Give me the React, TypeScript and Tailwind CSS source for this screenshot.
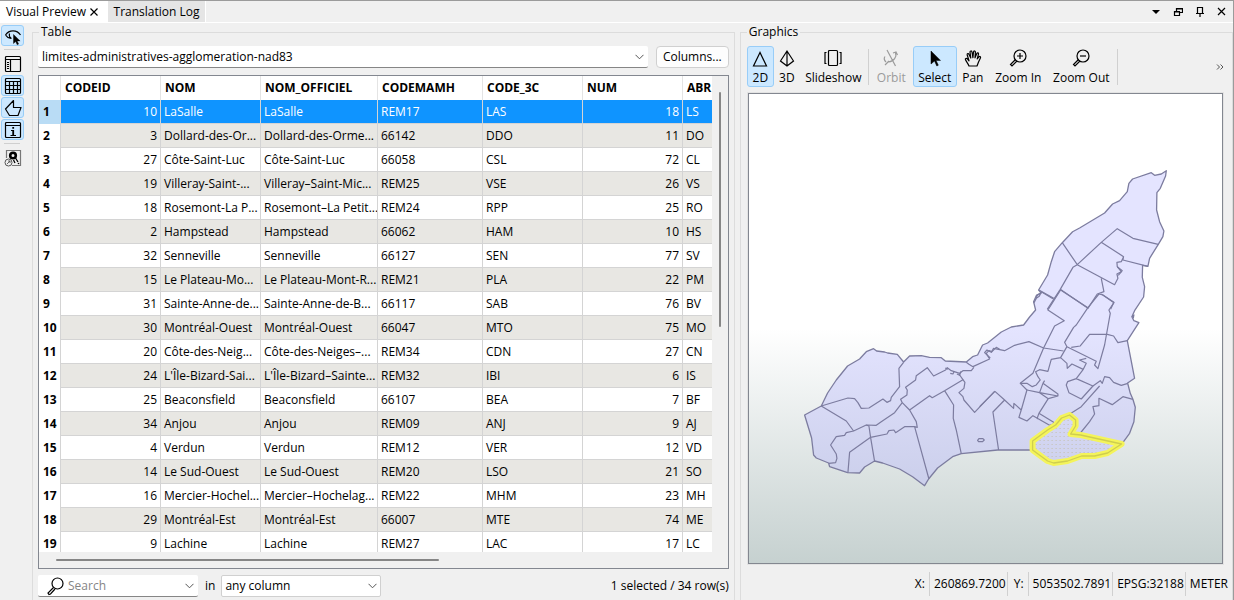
import type { ReactNode } from "react";

type Row = [number, string, string, string, string, number, string];

const rows: Row[] = [
  [10, "LaSalle", "LaSalle", "REM17", "LAS", 18, "LS"],
  [3, "Dollard-des-Or...", "Dollard-des-Orme...", "66142", "DDO", 11, "DO"],
  [27, "Côte-Saint-Luc", "Côte-Saint-Luc", "66058", "CSL", 72, "CL"],
  [19, "Villeray-Saint-...", "Villeray–Saint-Mic...", "REM25", "VSE", 26, "VS"],
  [18, "Rosemont-La P...", "Rosemont–La Petit...", "REM24", "RPP", 25, "RO"],
  [2, "Hampstead", "Hampstead", "66062", "HAM", 10, "HS"],
  [32, "Senneville", "Senneville", "66127", "SEN", 77, "SV"],
  [15, "Le Plateau-Mo...", "Le Plateau-Mont-R...", "REM21", "PLA", 22, "PM"],
  [31, "Sainte-Anne-de...", "Sainte-Anne-de-B...", "66117", "SAB", 76, "BV"],
  [30, "Montréal-Ouest", "Montréal-Ouest", "66047", "MTO", 75, "MO"],
  [20, "Côte-des-Neig...", "Côte-des-Neiges–...", "REM34", "CDN", 27, "CN"],
  [24, "L'Île-Bizard-Sai...", "L'Île-Bizard–Sainte...", "REM32", "IBI", 6, "IS"],
  [25, "Beaconsfield", "Beaconsfield", "66107", "BEA", 7, "BF"],
  [34, "Anjou", "Anjou", "REM09", "ANJ", 9, "AJ"],
  [4, "Verdun", "Verdun", "REM12", "VER", 12, "VD"],
  [14, "Le Sud-Ouest", "Le Sud-Ouest", "REM20", "LSO", 21, "SO"],
  [16, "Mercier-Hochel...", "Mercier–Hochelag...", "REM22", "MHM", 23, "MH"],
  [29, "Montréal-Est", "Montréal-Est", "66007", "MTE", 74, "ME"],
  [9, "Lachine", "Lachine", "REM27", "LAC", 17, "LC"],
];

const headers = ["CODEID", "NOM", "NOM_OFFICIEL", "CODEMAMH", "CODE_3C", "NUM", "ABR"];

function Icon({ size = 20, children, className = "" }: { size?: number; children: ReactNode; className?: string }) {
  return (
    <svg
      width={size}
      height={size}
      viewBox={`0 0 ${size} ${size}`}
      fill="none"
      stroke="currentColor"
      strokeWidth="1.2"
      className={`shrink-0 ${className}`}
      aria-hidden="true"
    >
      {children}
    </svg>
  );
}

const Chevron = () => (
  <svg width="9" height="6" viewBox="0 0 9 6" fill="none" stroke="#555" className="pointer-events-none absolute right-1 top-2" aria-hidden="true">
    <path d="M.5.8l4 4 4-4" />
  </svg>
);

const inspectIcon = (
  <Icon>
    <path d="M2.500 9C6 3.500 14 3.500 17.500 9M2.500 9c1 1.800 3 3 5.500 3.400M6.500 7.500c-.5 2 .2 4 2 5" />
    <path d="M10.500 8.500v9l2.200-2 1.500 3.300 1.400-.7-1.500-3.200h3z" fill="currentColor" strokeWidth=".4" />
  </Icon>
);
const panelIcon = (
  <Icon>
    <rect x="2.500" y="2.500" width="15" height="15" rx="1" />
    <path d="M2.500 5.500h15M7.500 5.500v12" />
    <path d="M4 8.500h2M4 10.500h2M4 12.500h2M4 14.500h2" />
  </Icon>
);
const gridIcon = (
  <Icon>
    <rect x="2.500" y="2.500" width="15" height="15" rx="1" />
    <path d="M2.500 5.500h15M2.500 9.500h15M2.500 13.500h15M6.500 5.500v12M10.500 5.500v12M14.500 5.500v12" />
  </Icon>
);
const shapeIcon = (
  <Icon>
    <path d="M10.500 2.500L2.500 11l4 6.500h8.500l3-8h-7.500z" strokeLinejoin="round" />
  </Icon>
);
const infoIcon = (
  <Icon>
    <rect x="2.500" y="2.500" width="15" height="15" rx="1" />
    <path d="M2.500 5.500h15M8 10.500h2M7.500 15.500h5.500" />
    <path d="M10.200 10v5.500M10.200 7v1.800" strokeWidth="1.800" />
  </Icon>
);
const cogIcon = (
  <Icon>
    <path d="M3.500 10V2.500h14v15H9" stroke="#777" />
    <circle cx="10" cy="7.500" r="2.800" strokeWidth="2.600" />
    <path d="M12.500 10l2.500 4M10.500 12l1.500 3" strokeWidth="1.300" />
    <circle cx="5.500" cy="14.500" r="3.500" fill="#f0f0f0" stroke="#555" strokeWidth="1" />
    <path d="M4 16l3-3M5 13h2v2" stroke="#555" strokeWidth=".9" />
    <circle cx="15.500" cy="15.500" r=".8" fill="currentColor" stroke="none" />
  </Icon>
);

function SideButton({ active = false, label, children }: { active?: boolean; label: string; children: ReactNode }) {
  return (
    <button
      type="button"
      aria-label={label}
      aria-pressed={active}
      className={`flex h-[21px] w-[23px] items-center justify-center rounded-[3px] border ${
        active ? "border-[#98cdf8] bg-[#cce8ff]" : "border-transparent"
      }`}
    >
      {children}
    </button>
  );
}

function ToolButton({
  label,
  icon,
  width,
  active = false,
  disabled = false,
}: {
  label: string;
  icon: ReactNode;
  width: string;
  active?: boolean;
  disabled?: boolean;
}) {
  return (
    <button
      type="button"
      disabled={disabled}
      className={`flex h-[41px] shrink-0 flex-col items-center justify-between rounded-[3px] border pt-px ${width} ${
        active ? "border-[#98cdf8] bg-[#cce8ff]" : "border-transparent"
      } ${disabled ? "text-[#9b9b9b]" : ""}`}
    >
      {icon}
      <span className="whitespace-nowrap leading-4">{label}</span>
    </button>
  );
}

const triangleIcon = (
  <Icon>
    <path d="M10 4.500L3.500 18h13z" />
  </Icon>
);
const pyramidIcon = (
  <Icon>
    <path d="M10 3L3.500 13l6.500 5 6.500-5zM10 3v15" />
  </Icon>
);
const slidesIcon = (
  <Icon>
    <rect x="5.500" y="2.500" width="9" height="15" rx="1" />
    <path d="M3.500 4.500h-1.500v11h1.500M16.500 4.500h1.500v11h-1.500" />
  </Icon>
);
const orbitIcon = (
  <Icon>
    <path d="M6 2l8.500 16M14.500 4.500c1.500 4-1.500 9-7 9.500M12 5l3-1 1.500 3M4 8.500c-1.500 2-.5 4 1 5.500M4 17l4-4" />
  </Icon>
);
const pointerIcon = (
  <Icon>
    <path d="M6 3v13l3.500-3 2.300 5 1.500-.8-2.200-4.800h4.400z" fill="currentColor" strokeWidth=".5" />
  </Icon>
);
const handIcon = (
  <Icon>
    <path
      d="M6 18c-.5-2-2.500-4-3.500-6.200-.6-1.300.9-2 1.900-.9L6 12.800 4.200 7c-.4-1.600 1.300-2 1.800-.6L7.800 10 7 4.200C6.900 2.700 8.700 2.500 9 4l.9 5.700L10.500 4c.2-1.500 2-1.300 1.900.2L12 9.800l1.800-4.300c.6-1.200 2-.7 1.700.6l-1.300 4.700 1.800-2c1-.9 2 0 1.400 1.200-1.300 2.600-2.400 5-3.400 8z"
      strokeLinejoin="round"
    />
  </Icon>
);
const zoomInIcon = (
  <Icon>
    <circle cx="12" cy="8" r="6" />
    <path d="M9 8h6M12 5v6" />
    <path d="M7.500 11.500L2.500 16.500l1.500 1.500 5-5" />
  </Icon>
);
const zoomOutIcon = (
  <Icon>
    <circle cx="12" cy="8" r="6" />
    <path d="M9 8h6" />
    <path d="M7.500 11.500L2.500 16.500l1.500 1.500 5-5" />
  </Icon>
);

function DistrictMap() {
  return (
    <svg viewBox="0 0 472 469" className="h-full w-full" role="img" aria-label="Map of the agglomeration">
      <defs>
        <linearGradient id="land" x1="0" y1="0" x2="0" y2="1">
          <stop offset="0.5" stopColor="#e4e4ff" />
          <stop offset="1" stopColor="#cbcfeb" />
        </linearGradient>
        <pattern id="dots" width="4" height="4" patternUnits="userSpaceOnUse">
          <rect width="1" height="1" fill="#c3bfae" />
        </pattern>
      </defs>
      <g transform="translate(-750 -94)" strokeLinejoin="round" fill="none" stroke="#7c7c9f">
        <path
          fill="url(#land)"
          strokeWidth="1.300"
          d="M1166.700 170.700L1166 176 1160.700 188.300 1157.300 192.700 1157 210 1160 221.700 1164.300 231 1163.300 236.700 1158.700 244.300 1150 258.300 1148.300 266.300 1143 265.300 1142.700 277.300 1145 286.700 1144 297 1135 310.700 1132.300 316.700 1134.300 320.700 1139.300 322.700 1127.700 340.700 1135 378.300 1128 383 1130.700 393.300 1133.300 399.300 1135.700 407.300 1134.300 421.700 1130 433.300 1122.700 443.300 1108 452.700 1095 455.700 1081.700 455.700 1068 461 1054 462.700 1048 461 1033 450 998 450 961.700 453.700 953 456.700 938 468 929 479 925 485.700 913 476.700 900 469 883 463 875 461 865 467 860 473 848 472.700 830 466.700 829 463 816.700 458 814 455 812 438 805 415 821.700 406 828 393 836.700 380 848 366 860 359 866.700 351.700 874 348.700 877 351 885 352 888 353 897.700 354.300 904 362 910 356 921.700 355.700 930 357.300 941.700 357.700 945.700 361 966.700 362 973 356.700 978 355 983 345 988 343 993 339 1001.700 332 1011.700 327 1024 325 1030 317 1036 310 1034 301.700 1037 295 1041.700 293 1039 290 1048 275 1051.700 261.700 1055 251.700 1062.700 242.700 1073 231.700 1080 228 1105 213 1113 204 1120 200.700 1127.700 191.700 1129.300 183.300 1133 179 1151.700 172.700 1155 175.300 1161.700 174z"
        />
        <g transform="translate(800 330) scale(.33333)" strokeWidth="3.600">
          <path d="M65 228L145 204 165 206 175 218 185 235 208 234 250 207 262 217 273 212 275 202 300 170 298 115 312 97" />
          <path d="M65 228L140 273 162 303" />
          <path d="M88 400L108 398 112 385 110 372 93 345 110 320 135 316 140 308 162 303 200 285 230 286 245 275 285 248 308 218 303 208 322 195 323 180 318 172 348 150 350 137 383 113 402 138 438 120 443 113 455 122 480 130 490 122 515 122 523 112" />
          <path d="M308 218L330 240 350 275 353 292 345 290 315 290 288 308 283 300 268 302 262 312 213 322 150 367 145 428M200 285L208 288 213 322 225 394M330 240L390 197 398 203 435 182 490 149 478 132M435 182L462 225 461 265 470 300 485 371M345 290L388 447M500 97L508 103 520 110 570 87 560 70 568 62 577 65 590 52 600 58" />
          <path d="M490 149L496 157 493 175 478 188 490 200 493 210 525 247 585 184" />
          <path d="M437 114l8 4M452 130l8 2 4-8M472 132l8 4 4-12" />
          <path d="M538 326h12l4 4-5 5h-12l-3-4z" />
        </g>
        <g transform="translate(980 290) scale(.33333)" strokeWidth="3.600">
          <path d="M32 204L15 188 22 180 35 187 42 175 75 182 105 166 148 155 192 174 252 183" />
          <path d="M185 5L220 26M243 0L205 60 254 92 225 108 192 174 160 250 122 280 142 300 125 360" />
          <path d="M243 0L325 53 290 105 282 112 255 157 262 170 350 214 345 225 355 236 375 165 392 70 388 60 403 38 370 15 358 12 325 53" />
          <path d="M275 172L302 168 330 133 383 133 402 138 415 158 443 152M262 170L243 203 215 208 205 244 180 239 168 245 175 260 182 270 170 285 158 290 142 280 122 280M243 203L262 220 263 235 277 222 311 238 290 266 340 288 305 327 268 308 260 285 264 275 290 266M311 238L320 220 300 210 320 205" />
          <path d="M142 300L180 308 235 318M206 326L178 370 172 387M227 400L305 350 360 288M340 288L362 272 368 280 375 260 390 263 402 277 425 286 445 280M180 308L190 280 235 312 235 318 206 326 180 308M190 280l5-8M125 360L118 382 142 393 160 377 210 406 227 400M178 370L227 400M300 432L330 395 345 372 340 350 358 347 358 325 398 344 430 320 460 328" />
          <path d="M125 360L103 340 102 355 75 330 46 304 0 350M75 330L40 366 57 480" />
          <path d="M163 38l8-14 8-5 6-12-13 10-5 14zM457 80l6-5-2 10" />
        </g>
        <g transform="translate(1010 160) scale(.33333)" strokeWidth="3.600">
          <path d="M158 248L203 314 275 247 323 206 370 235 446 253M275 247L342 290 340 300 415 319M342 290L335 305 322 307 323 320 335 335 322 342 325 355 315 374 203 314 190 322 152 388 113 448M152 388L235 445 263 402 283 395 275 355M275 402L313 427 303 448M88 390L135 416" />
          <path d="M323 320l15 12-12 14" />
        </g>
        <path
          d="M1122 444L1108 453 1095 456 1082 456 1068 461 1054 463 1048 461 1033 450 1033 441 1048 430 1056 425 1062 418 1070 415 1076 420 1076 426 1071 434 1081 435z"
          fill="url(#dots)"
          stroke="#f4f45a"
          strokeWidth="6"
        />
        <path
          d="M1122 444L1108 453 1095 456 1082 456 1068 461 1054 463 1048 461 1033 450 1033 441 1048 430 1056 425 1062 418 1070 415 1076 420 1076 426 1071 434 1081 435z"
          stroke="#cfce50"
          strokeWidth="1.300"
        />
      </g>
    </svg>
  );
}

const cell = "h-6 overflow-hidden whitespace-nowrap border-b border-r border-[#d4d4d4] px-[3px] font-normal";

export default function App() {
  return (
    <div className="flex h-screen flex-col overflow-hidden border-r border-t border-[#9b9b9b] bg-[#f0f0f0] font-['Open_Sans','Noto_Sans',sans-serif] text-[12px] leading-4 text-black">
      <header className="flex h-[22px] shrink-0 items-stretch border-b border-white">
        <div role="tablist" className="flex">
          <div className="flex w-[108px] items-center gap-1 bg-white pl-[6px]">
            <button type="button" role="tab" aria-selected="true" className="whitespace-nowrap">
              Visual Preview
            </button>
            <button type="button" aria-label="Close tab">
              <Icon size={8}>
                <path d="M.5.5l7 7M7.500.5l-7 7" />
              </Icon>
            </button>
          </div>
          <button type="button" role="tab" aria-selected="false" className="w-[98px] whitespace-nowrap border-r border-white bg-[#e5e5e5]">
            Translation Log
          </button>
        </div>
        <div className="ml-auto flex items-center gap-3 pr-[7px]">
          <button type="button" aria-label="Menu">
            <Icon size={10}>
              <path d="M1 3h8l-4 4z" fill="currentColor" stroke="none" />
            </Icon>
          </button>
          <button type="button" aria-label="Restore">
            <Icon size={10}>
              <path d="M3.500 4V1.500h6v4H7M3 2h7" />
              <path d="M1.500 4.500h5v4h-5zM1 5h6" />
            </Icon>
          </button>
          <button type="button" aria-label="Pin">
            <Icon size={10}>
              <path d="M2.500 6.500V.500h5v6M1 6.500h8M5 6.500V10" />
            </Icon>
          </button>
          <button type="button" aria-label="Close">
            <Icon size={9}>
              <path d="M1 1l7 7M8 1L1 8" />
            </Icon>
          </button>
        </div>
      </header>

      <div className="flex min-h-0 flex-1">
        <nav aria-label="Views" className="flex w-8 shrink-0 flex-col gap-px pl-px pt-[2px]">
          <SideButton active label="Inspect">{inspectIcon}</SideButton>
          <hr className="my-[2px] ml-[3px] mr-3 border-[#cfcfcf]" />
          <SideButton label="Side panel">{panelIcon}</SideButton>
          <SideButton active label="Table">{gridIcon}</SideButton>
          <SideButton active label="Geometry">{shapeIcon}</SideButton>
          <SideButton active label="Information">{infoIcon}</SideButton>
          <hr className="my-[2px] ml-[3px] mr-3 border-[#cfcfcf]" />
          <SideButton label="Settings">{cogIcon}</SideButton>
        </nav>

        <fieldset className="flex min-w-0 flex-[692] flex-col border border-b-0 border-[#dcdcdc] px-[5px]">
          <legend className="ml-px h-[18px] px-[2px] leading-[18px]">Table</legend>
          <div className="mt-[5px] flex h-[22px] shrink-0 gap-2">
            <div className="relative min-w-0 flex-1">
              <select
                aria-label="Layer"
                className="h-full w-full appearance-none rounded-[2px] border-b border-[#868686] bg-white pl-1 outline-none"
              >
                <option>limites-administratives-agglomeration-nad83</option>
              </select>
              <Chevron />
            </div>
            <button type="button" className="w-[73px] shrink-0 rounded-[4px] border border-[#d0d0d0] bg-[#fdfdfd]">
              Columns...
            </button>
          </div>

          <div className="mt-[7px] flex min-h-0 flex-1 flex-col border border-[#838790]">
            <div className="flex min-h-0 flex-1">
              <div className="min-w-0 flex-1 overflow-hidden bg-white">
                <table className="w-[744px] table-fixed border-separate border-spacing-0">
                  <colgroup>
                    <col className="w-[22px]" />
                    <col className="w-[100px]" />
                    <col className="w-[100px]" />
                    <col className="w-[117px]" />
                    <col className="w-[105px]" />
                    <col className="w-[100px]" />
                    <col className="w-[100px]" />
                    <col className="w-[100px]" />
                  </colgroup>
                  <thead>
                    <tr>
                      <td className="h-6 border-r border-[#e4e4e4]" />
                      {headers.map((h) => (
                        <th key={h} scope="col" className="h-6 whitespace-nowrap border-r border-[#e4e4e4] pl-1 text-left font-bold">
                          {h}
                        </th>
                      ))}
                    </tr>
                  </thead>
                  <tbody>
                    {rows.map((row, i) => (
                      <tr key={row[3]} className={i === 0 ? "bg-[#0f94ff] text-white" : i % 2 ? "bg-[#e8e7e3]" : "bg-white"}>
                        <th
                          scope="row"
                          className={`h-6 border-r border-[#d4d4d4] pl-1 text-left font-bold text-black ${i === 0 ? "bg-[#b9dcf5]" : "bg-white"}`}
                        >
                          {i + 1}
                        </th>
                        {row.map((value, c) => (
                          <td key={c} className={`${cell} ${typeof value === "number" ? "text-right" : "text-left"}`}>
                            {value}
                          </td>
                        ))}
                      </tr>
                    ))}
                  </tbody>
                </table>
              </div>
              <div className="w-4 shrink-0 pl-[7px] pt-4">
                <div className="h-[51%] w-[2px] rounded bg-[#868686]" />
              </div>
            </div>
            <div className="h-4 shrink-0 pl-[17px] pt-[7px]">
              <div className="h-[2px] w-[57%] rounded bg-[#868686]" />
            </div>
          </div>

          <div className="mb-[3px] mt-[6px] flex h-[22px] shrink-0 items-center">
            <label className="relative flex h-full w-40 items-center rounded-[2px] border-b border-[#868686] bg-white pl-2">
              <Icon>
                <circle cx="11.500" cy="7.500" r="5.500" />
                <path d="M7.500 11.500L2 17l1 1.500 1.500-.5 4.500-5" />
              </Icon>
              <input aria-label="Search" placeholder="Search" className="ml-[2px] w-24 bg-transparent outline-none placeholder:text-[#858585]" />
              <Chevron />
            </label>
            <label className="flex h-full items-center gap-[6px] pl-[7px]">
              in
              <span className="relative h-full w-40">
                <select className="h-full w-full appearance-none rounded-[2px] border border-[#d0d0d0] bg-white pl-[3px] outline-none">
                  <option>any column</option>
                </select>
                <Chevron />
              </span>
            </label>
            <span className="ml-auto whitespace-nowrap">1 selected / 34 row(s)</span>
          </div>
        </fieldset>

        <fieldset className="ml-[5px] flex min-w-0 flex-[478] flex-col border border-b-0 border-[#dcdcdc] pl-[6px] pr-[8px]">
          <legend className="h-[18px] px-[2px] leading-[18px]">Graphics</legend>
          <div role="toolbar" aria-label="Graphics tools" className="mt-[5px] flex shrink-0 items-center">
            <ToolButton label="2D" icon={triangleIcon} width="w-[27px]" active />
            <ToolButton label="3D" icon={pyramidIcon} width="w-[26px]" />
            <ToolButton label="Slideshow" icon={slidesIcon} width="w-[67px]" />
            <span className="mx-px h-9 w-px bg-[#d0d0d0]" />
            <ToolButton label="Orbit" icon={orbitIcon} width="w-[43px]" disabled />
            <ToolButton label="Select" icon={pointerIcon} width="w-[44px]" active />
            <ToolButton label="Pan" icon={handIcon} width="w-[32px]" />
            <ToolButton label="Zoom In" icon={zoomInIcon} width="w-[59px]" />
            <ToolButton label="Zoom Out" icon={zoomOutIcon} width="w-[67px]" />
            <span className="mx-[2px] h-9 w-px bg-[#d0d0d0]" />
            <button type="button" aria-label="More tools" className="ml-auto">
              <Icon size={8}>
                <path d="M1 1.500l2.500 2.500L1 6.500M4.500 1.500L7 4 4.500 6.500" stroke="#555" strokeWidth="1" />
              </Icon>
            </button>
          </div>
          <div className="mt-[5px] min-h-0 flex-1 border border-[#e3e3e3]">
            <div className="h-full border border-[#838790] bg-linear-to-b from-white from-50% to-[#c6d1d0]">
              <DistrictMap />
            </div>
          </div>
          <div className="mb-1 mt-[7px] flex h-6 shrink-0 items-center justify-end whitespace-nowrap">
            <span className="pr-1">X:</span>
            <span className="border-l border-[#d0d0d0] pl-1 pr-px leading-6">260869.7200</span>
            <span className="border-l border-[#d0d0d0] pl-[6px] pr-1 leading-6">Y:</span>
            <span className="border-l border-[#d0d0d0] pl-1 pr-px leading-6">5053502.7891</span>
            <span className="border-l border-[#d0d0d0] pl-1 pr-px leading-6">EPSG:32188</span>
            <span className="-mr-1 border-l border-[#d0d0d0] pl-1 leading-6">METER</span>
          </div>
        </fieldset>
      </div>
    </div>
  );
}
